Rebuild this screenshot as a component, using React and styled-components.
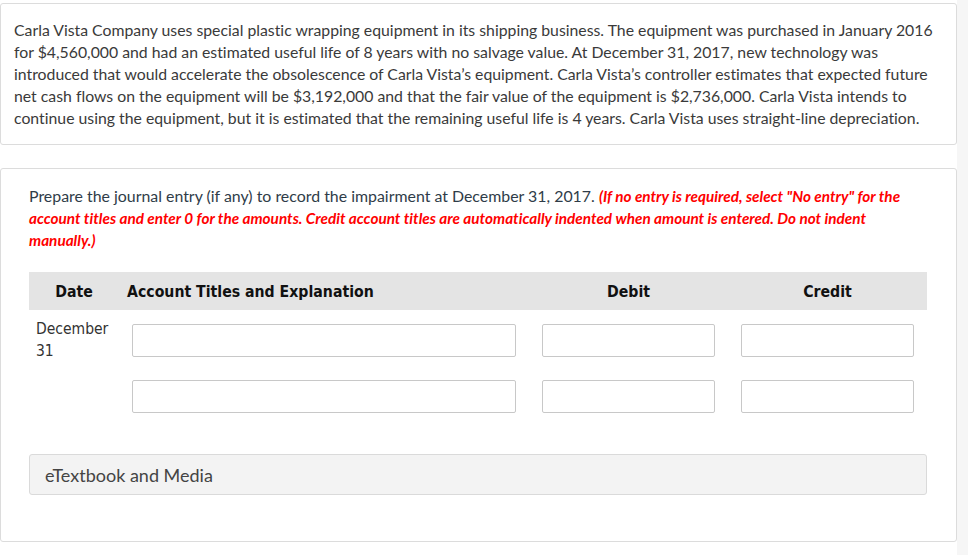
import styled, { createGlobalStyle } from "styled-components";

const GlobalStyle = createGlobalStyle`
    html, body {
        margin: 0;
        padding: 0;
        background: #fff;
    }
    body {
        font-family: Lato, "Open Sans", sans-serif;
        font-variant-ligatures: no-common-ligatures;
    }
`;

const Page = styled.div`
    display: flex;
    width: 968px;
    min-height: 555px;
`;
const Main = styled.div`
    width: 957px;
    padding-top: 3px;
    display: flex;
    flex-direction: column;
    gap: 23px;
`;
const Track = styled.div`
    flex: 1;
    background: #f6f6f6;
`;
const Card = styled.div`
    border: 1px solid #dcdcdc;
    border-radius: 3px;
    background: #fff;
    padding: ${(p) => p.$pad};
`;
const Problem = styled.p`
    margin: 0;
    font-size: 15.8px;
    line-height: 22px;
    color: #3a3a3a;
`;
const Prompt = styled.p`
    margin: 0;
    font-size: 15.9px;
    line-height: 22px;
    color: #2f3c48;
`;
const Note = styled.em`
    color: #f00;
    font-weight: 700;
    font-size: 15.3px;
`;
const Table = styled.div`
    margin-top: 21px;
    width: 898px;
`;
const HeadRow = styled.div`
    display: grid;
    grid-template-columns: 90px 410px 199px 199px;
    height: 38px;
    align-items: center;
    background: #e4e4e4;
`;
const Row = styled.div`
    display: grid;
    grid-template-columns: 90px 410px 199px 199px;
    box-sizing: border-box;
    height: 56px;
    padding: 8px 0 9px;
    align-items: start;
`;
const HeadCell = styled.div`
    font-family: "DejaVu Sans Condensed", "DejaVu Sans", sans-serif;
    font-weight: 700;
    font-size: 15.7px;
    color: #111;
    text-align: ${(p) => p.$align || "center"};
    padding-left: ${(p) => p.$indent || "0"};
`;
const DateCell = styled.div`
    font-family: "DejaVu Sans Condensed", "DejaVu Sans", sans-serif;
    font-size: 15.5px;
    line-height: 22px;
    color: #333;
    padding-left: 7px;
`;
const Cell = styled.div`
    padding: 6px 13px 0;
`;
const Input = styled.input`
    display: block;
    box-sizing: border-box;
    width: 100%;
    height: 33px;
    border: 1px solid #c8c8c8;
    border-radius: 2px;
    background: #fff;
    margin: 0;
`;
const Media = styled.div`
    margin-top: 32px;
    width: 898px;
    box-sizing: border-box;
    height: 41px;
    background: #f3f3f3;
    border: 1px solid #dadada;
    border-radius: 3px;
    display: flex;
    align-items: center;
    padding-left: 15px;
    font-size: 18px;
    color: #444;
`;

const rows = [
    { date: ["December", "31"] },
    { date: null },
];

const App = () => {
    return (
        <>
        <GlobalStyle />
        <Page>
            <Main>
                <Card $pad="15px 13px 15px 13px">
                    <Problem>
                        Carla Vista Company uses special plastic wrapping equipment in its shipping business. The equipment was purchased in January 2016 for $4,560,000 and had an estimated useful life of 8 years with no salvage value. At December 31, 2017, new technology was introduced that would accelerate the obsolescence of Carla Vista’s equipment. Carla Vista’s controller estimates that expected future net cash flows on the equipment will be $3,192,000 and that the fair value of the equipment is $2,736,000. Carla Vista intends to continue using the equipment, but it is estimated that the remaining useful life is 4 years. Carla Vista uses straight-line depreciation.
                    </Problem>
                </Card>
                <Card $pad="16px 28px 46px 28px">
                    <Prompt>
                        Prepare the journal entry (if any) to record the impairment at December 31, 2017.{" "}
                        <Note>(If no entry is required, select "No entry" for the account titles and enter 0 for the amounts. Credit account titles are automatically indented when amount is entered. Do not indent manually.)</Note>
                    </Prompt>
                    <Table>
                        <HeadRow>
                            <HeadCell>Date</HeadCell>
                            <HeadCell $align="left" $indent="8px">Account Titles and Explanation</HeadCell>
                            <HeadCell>Debit</HeadCell>
                            <HeadCell>Credit</HeadCell>
                        </HeadRow>
                        {rows.map((r, i) => (
                            <Row key={i}>
                                <DateCell>
                                    {r.date && r.date.map((d) => <div key={d}>{d}</div>)}
                                </DateCell>
                                <Cell><Input type="text" /></Cell>
                                <Cell><Input type="text" /></Cell>
                                <Cell><Input type="text" /></Cell>
                            </Row>
                        ))}
                    </Table>
                    <Media>eTextbook and Media</Media>
                </Card>
            </Main>
            <Track />
        </Page>
        </>
    );
};

export default App;
